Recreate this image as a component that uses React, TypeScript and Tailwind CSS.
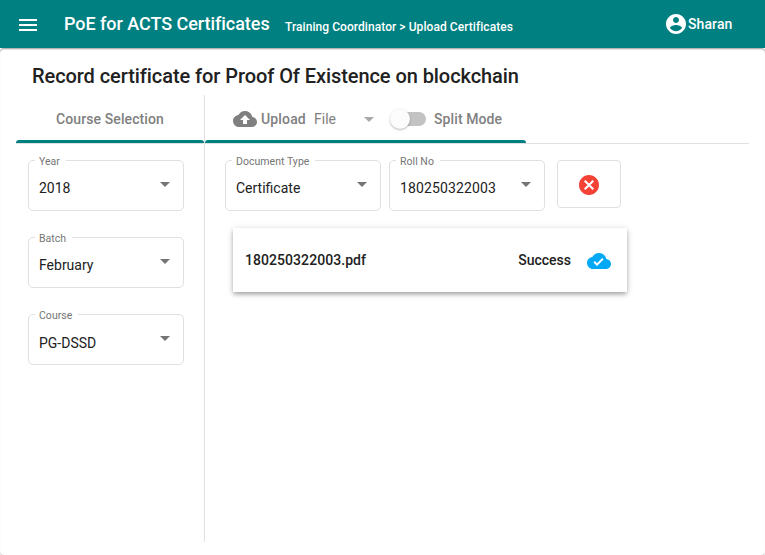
import React from "react";

function Icon({ d, className = "" }: { d: string; className?: string }) {
  return (
    <svg viewBox="0 0 24 24" className={`block size-6 shrink-0 fill-current ${className}`}>
      <path d={d} />
    </svg>
  );
}

const MENU = "M3 18h18v-2H3v2zm0-5h18v-2H3v2zm0-7v2h18V6H3z";
const ACCOUNT =
  "M12 2C6.48 2 2 6.48 2 12s4.48 10 10 10 10-4.48 10-10S17.52 2 12 2zm0 3c1.66 0 3 1.34 3 3s-1.34 3-3 3-3-1.34-3-3 1.34-3 3-3zm0 14.2c-2.5 0-4.71-1.28-6-3.22.03-1.99 4-3.08 6-3.08 1.99 0 5.97 1.09 6 3.08-1.29 1.94-3.5 3.22-6 3.22z";
const CLOUD_UPLOAD =
  "M19.35 10.04C18.67 6.59 15.64 4 12 4 9.11 4 6.6 5.64 5.35 8.04 2.34 8.36 0 10.91 0 14c0 3.31 2.69 6 6 6h13c2.76 0 5-2.24 5-5 0-2.64-2.05-4.78-4.65-4.96zM14 13v4h-4v-4H7l5-5 5 5h-3z";
const CLOUD_DONE =
  "M19.35 10.04C18.67 6.59 15.64 4 12 4 9.11 4 6.6 5.64 5.35 8.04 2.34 8.36 0 10.91 0 14c0 3.31 2.69 6 6 6h13c2.76 0 5-2.24 5-5 0-2.64-2.05-4.78-4.65-4.96zM10 17l-3.5-3.5 1.41-1.41L10 14.17 15.18 9l1.41 1.41L10 17z";
const CANCEL =
  "M12 2C6.47 2 2 6.47 2 12s4.47 10 10 10 10-4.47 10-10S17.53 2 12 2zm5 13.59L15.59 17 12 13.41 8.41 17 7 15.59 10.59 12 7 8.41 8.41 7 12 10.59 15.59 7 17 8.41 13.41 12 17 15.59z";

function Arrow({ className = "" }: { className?: string }) {
  return (
    <span
      className={`block size-0 border-x-[5px] border-t-[5px] border-x-transparent border-t-[#757575] ${className}`}
    />
  );
}

function Select({
  label,
  value,
  valueClass = "pt-1",
}: {
  label: string;
  value: string;
  valueClass?: string;
}) {
  return (
    <div className="relative flex h-[51px] w-[156px] items-center justify-between rounded-[5px] border border-[#e0e0e0] pr-[13px] pl-[10px]">
      <span className="absolute -top-[5px] left-[6px] bg-white pr-[6px] pl-1 text-[10.5px] leading-3 tracking-[0.04px] whitespace-nowrap text-[#757575]">
        {label}
      </span>
      <span className={`text-sm leading-4 text-[#212121] ${valueClass}`}>{value}</span>
      <Arrow className="mb-[2px]" />
    </div>
  );
}

export default function App() {
  return (
    <div className="flex h-[555px] w-[765px] flex-col bg-white font-['Roboto',sans-serif] text-[#212121]">
      <header className="flex h-12 shrink-0 items-center bg-[#008080] pr-8 pl-4 font-medium text-white">
        <Icon d={MENU} className="mt-[2px]" />
        <span className="ml-6 w-[205px] text-lg leading-6 tracking-[-0.05px] whitespace-nowrap">
          PoE for ACTS Certificates
        </span>
        <span className="mt-[6px] ml-4 text-xs leading-4 tracking-[0.06px] whitespace-nowrap">
          Training Coordinator &gt; Upload Certificates
        </span>
        <div className="ml-auto flex items-center">
          <Icon d={ACCOUNT} />
          <span className="w-[45px] text-sm leading-4 tracking-[0.1px]">Sharan</span>
        </div>
      </header>

      <main className="flex flex-1 flex-col rounded-[4px] px-4 pb-[13px] shadow-[0_1px_1px_rgba(0,0,0,0.14),0_2px_1px_-1px_rgba(0,0,0,0.2),inset_0_1px_0_#b3b3b3,inset_0_2px_1px_#e4e4e4]">
        <h1 className="h-[47px] pt-4 pl-4 text-xl leading-6 font-medium tracking-[-0.07px]">
          Record certificate for Proof Of Existence on blockchain
        </h1>

        <div className="flex flex-1">
          <section className="w-[189px] border-r border-[#e0e0e0]">
            <div className="border-b border-[#e0e0e0]">
              <div className="flex h-12 items-center justify-center text-sm font-medium tracking-[0.1px] text-[#808080]">
                Course Selection
              </div>
              <div className="-mt-[3px] h-[3px] rounded-t-[3px] bg-[#008080]" />
            </div>
            <div className="flex flex-col gap-[26px] px-3 pt-4">
              <Select label="Year" value="2018" />
              <Select label="Batch" value="February" />
              <Select label="Course" value="PG-DSSD" valueClass="pt-[6px]" />
            </div>
          </section>

          <section className="flex-1">
            <div className="border-b border-[#e0e0e0]">
              <div className="flex h-12 items-center pl-7 text-sm font-medium text-[#808080]">
                <Icon d={CLOUD_UPLOAD} />
                <span className="ml-1 w-[53px] tracking-[0.15px]">Upload</span>
                <span className="w-[50px] font-normal">File</span>
                <Arrow className="border-t-[#a8a8a8]" />
                <div className="ml-[18px] flex h-[14px] w-[34px] items-center rounded-full bg-[#c3c3c3]">
                  <span className="-ml-[2px] size-5 shrink-0 rounded-full bg-[#fcfcfc] shadow-[0_1px_3px_rgba(0,0,0,0.2),0_1px_1px_rgba(0,0,0,0.1)]" />
                </div>
                <span className="ml-2 tracking-[0.1px]">Split Mode</span>
              </div>
              <div className="-mt-[3px] h-[3px] w-[321px] rounded-t-[3px] bg-[#008080]" />
            </div>

            <div className="flex items-start pt-4 pl-5">
              <Select label="Document Type" value="Certificate" />
              <div className="ml-2">
                <Select label="Roll No" value="180250322003" valueClass="pt-1 tracking-[0.13px]" />
              </div>
              <button className="ml-3 flex h-12 w-16 items-center justify-center rounded-[4px] border border-[#e0e0e0] text-[#f44336]">
                <Icon d={CANCEL} className="mt-[2px]" />
              </button>
            </div>

            <div className="mt-[17px] ml-7 flex h-16 w-[394px] items-center bg-white pr-4 pl-3 text-sm font-medium shadow-[0_3px_5px_-1px_rgba(0,0,0,0.2),0_2px_4px_rgba(0,0,0,0.14),0_1px_8px_rgba(0,0,0,0.12)]">
              <span className="tracking-[0.06px]">180250322003.pdf</span>
              <span className="ml-auto">Success</span>
              <Icon d={CLOUD_DONE} className="mt-[2px] ml-4 text-[#03a9f4]" />
            </div>
          </section>
        </div>
      </main>
    </div>
  );
}
